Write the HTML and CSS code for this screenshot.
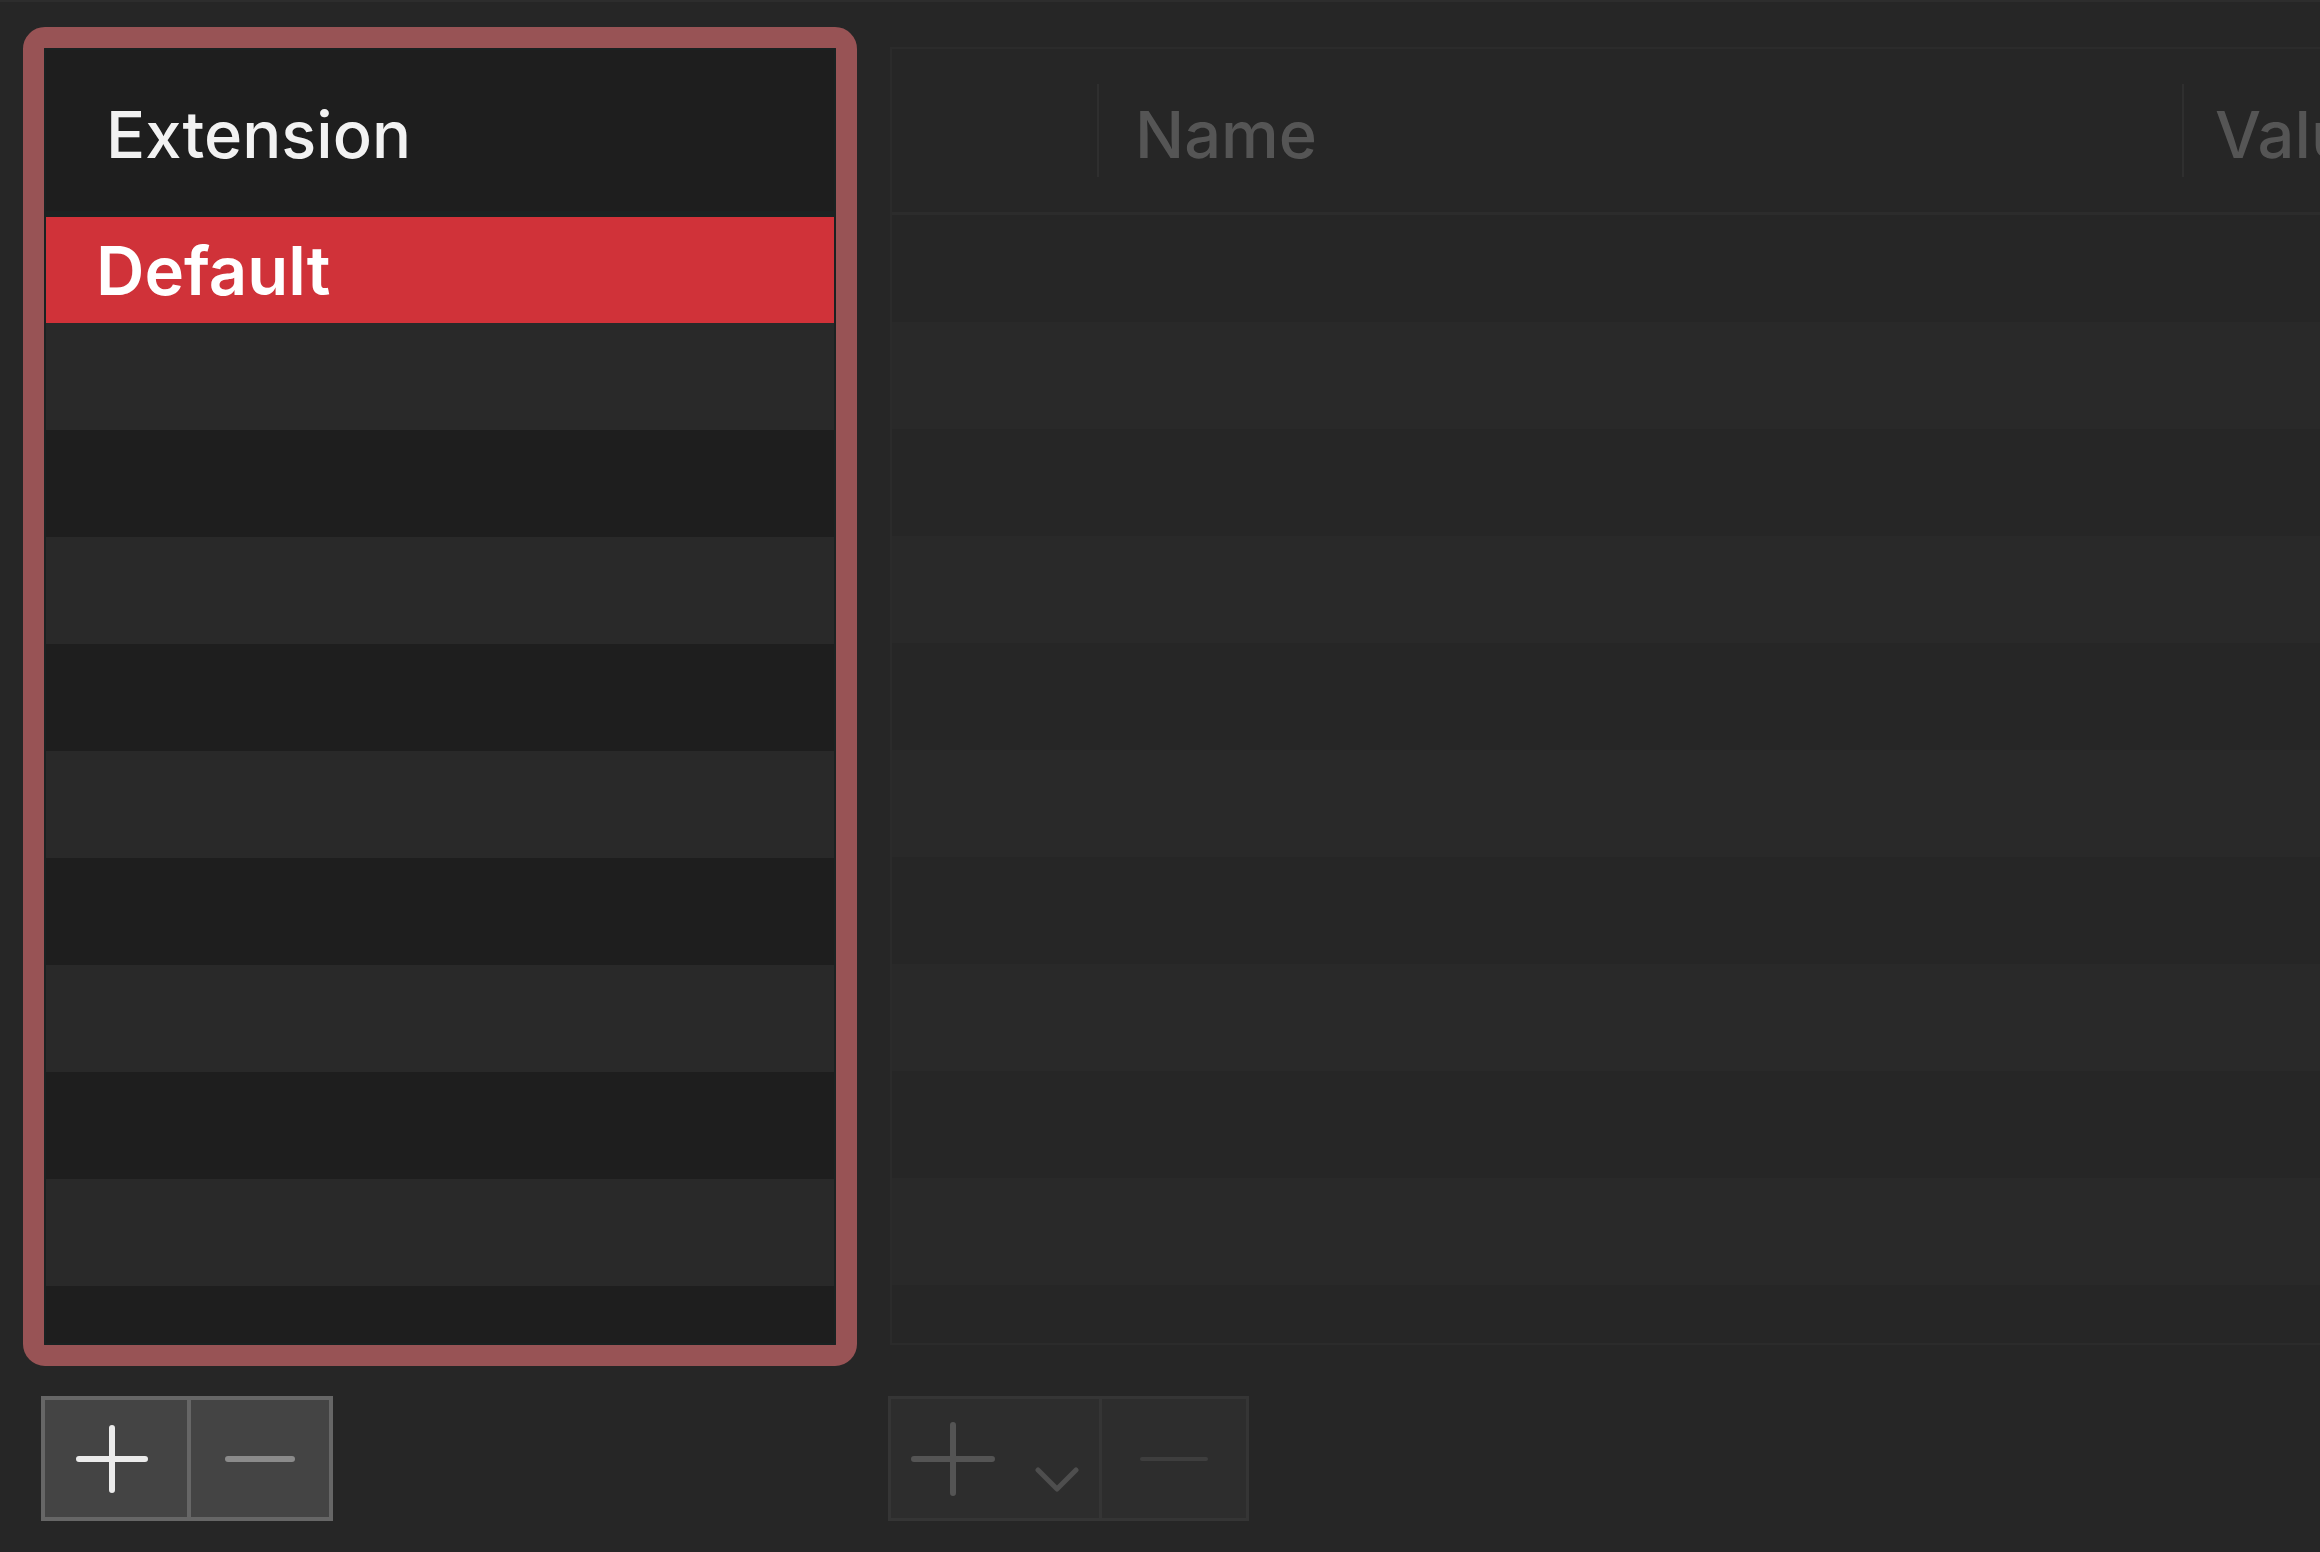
FILE: index.html
```html
<!DOCTYPE html>
<html lang="en">
<head>
    <meta charset="UTF-8">
    <meta name="viewport" content="width=device-width, initial-scale=1.0">
    <title>Extensions</title>
    <link rel="stylesheet" href="styles.css">
</head>
<body>
    <div class="side">
        <div class="frame">
            <div class="list">
                <div class="list-head">Extension</div>
                <div class="list-row selected">Default</div>
                <div class="list-row"></div>
                <div class="list-row"></div>
                <div class="list-row"></div>
                <div class="list-row"></div>
                <div class="list-row"></div>
                <div class="list-row"></div>
                <div class="list-row"></div>
                <div class="list-row"></div>
                <div class="list-row"></div>
                <div class="list-row"></div>
            </div>
        </div>
        <div class="btn-group active">
            <button class="seg seg-plus">
                <svg width="74" height="70" viewBox="0 0 74 70"><path d="M37 4 V66 M4 35 H70" /></svg>
            </button>
            <button class="seg">
                <svg width="72" height="10" viewBox="0 0 72 10"><path d="M4 5 H68" /></svg>
            </button>
        </div>
    </div>

    <div class="main">
        <div class="table">
            <div class="table-head">
                <div class="col col-first"></div>
                <div class="col col-name">Name</div>
                <div class="col col-value">Value</div>
            </div>
            <div class="table-body">
                <div class="table-row"></div>
                <div class="table-row"></div>
                <div class="table-row"></div>
                <div class="table-row"></div>
                <div class="table-row"></div>
                <div class="table-row"></div>
                <div class="table-row"></div>
                <div class="table-row"></div>
                <div class="table-row"></div>
                <div class="table-row"></div>
                <div class="table-row"></div>
            </div>
        </div>
        <div class="btn-group disabled">
            <button class="seg seg-add">
                <svg class="plus" width="84" height="74" viewBox="0 0 84 74"><path d="M42 3 V71 M3 37 H81" /></svg>
                <svg class="chevron" width="44" height="26" viewBox="0 0 44 26"><path d="M3 3 L22 22 L41 3" /></svg>
            </button>
            <button class="seg seg-remove">
                <svg width="70" height="10" viewBox="0 0 70 10"><path d="M3 5 H67" /></svg>
            </button>
        </div>
    </div>
</body>
</html>
```

FILE: styles.css
```css
html, body {
    height: 100%;
}

body {
    margin: 0;
    padding: 25px 0 0 23px;
    border-top: 2px solid #2d2d2d;
    box-sizing: border-box;
    background-color: #262626;
    font-family: Inter, "Noto Sans", sans-serif;
    display: flex;
    gap: 33px;
    overflow: hidden;
}

/* left: extension list */

.side {
    width: 834px;
    flex-shrink: 0;
}

.frame {
    height: 1339px;
    border: 21px solid #985355;
    border-radius: 22px;
    box-sizing: border-box;
    background-color: #1e1e1e;
    overflow: hidden;
}

.list {
    height: 100%;
    border: 2px solid #1b2222;
    box-sizing: border-box;
    overflow: hidden;
}

.list-head {
    height: 167px;
    border-bottom: 6px solid #1b2222;
    padding: 8px 0 0 60px;
    box-sizing: border-box;
    display: flex;
    align-items: center;
    font-size: 65px;
    font-weight: 500;
    color: #f2f2f2;
    background-color: #1e1e1e;
}

.list-row {
    height: 107px;
    background-color: #1e1e1e;
}

.list-row:nth-child(odd) {
    background-color: #292929;
}

.list-row.selected {
    height: 106px;
    padding-left: 50px;
    display: flex;
    align-items: center;
    font-size: 67px;
    font-weight: 600;
    color: #ffffff;
    background-color: #d03239;
}

/* segmented add / remove buttons */

.btn-group {
    display: flex;
    height: 125px;
    box-sizing: border-box;
}

.seg {
    margin: 0;
    padding: 0;
    display: flex;
    align-items: center;
    justify-content: center;
    background: none;
    border: none;
}

.seg svg path {
    fill: none;
    stroke-linecap: round;
    stroke-linejoin: round;
}

.btn-group.active {
    margin: 30px 0 0 18px;
    width: 292px;
    border: 4px solid #666666;
    background-color: #444444;
}

.btn-group.active .seg {
    width: 50%;
}

.btn-group.active .seg-plus {
    padding-right: 8px;
}

.btn-group.active .seg + .seg {
    border-left: 4px solid #666666;
}

.btn-group.active .seg:first-child path {
    stroke: #ebebeb;
    stroke-width: 6;
}

.btn-group.active .seg + .seg path {
    stroke: #8b8b8b;
    stroke-width: 6;
}

.btn-group.disabled {
    margin: 51px 0 0 -2px;
    width: 361px;
    border: 3px solid #353535;
    background-color: #2d2d2d;
}

.seg-add {
    width: 208px;
    justify-content: flex-start;
    padding-left: 20px;
    gap: 40px;
}

.seg-add .plus path {
    stroke: #545454;
    stroke-width: 6;
}

.seg-add .chevron {
    margin-top: 42px;
}

.seg-add .chevron path {
    stroke: #4e4e4e;
    stroke-width: 5;
}

.seg-remove {
    flex: 1;
    border-left: 3px solid #353535;
}

.seg-remove path {
    stroke: #3e3e3e;
    stroke-width: 4;
}

/* right: key / value table */

.main {
    flex: 1;
    min-width: 0;
    margin-top: 20px;
}

.table {
    width: 1600px;
    height: 1298px;
    border: 2px solid #2b2b2b;
    border-right: none;
    box-sizing: border-box;
    overflow: hidden;
}

.table-head {
    height: 166px;
    border-bottom: 3px solid #2c2c2c;
    box-sizing: border-box;
    display: flex;
    align-items: center;
    background-color: #262626;
}

.col {
    height: 93px;
    padding-top: 8px;
    display: flex;
    align-items: center;
    font-size: 65px;
    font-weight: 500;
    color: #555555;
    box-sizing: border-box;
}

.col-first {
    width: 205px;
}

.col-name {
    width: 1085px;
    padding-left: 36px;
    border-left: 2px solid #2f2f2f;
}

.col-value {
    flex: 1;
    padding-left: 31px;
    border-left: 2px solid #2f2f2f;
}

.table-row {
    height: 107px;
    background-color: #262626;
}

.table-row:nth-child(even) {
    background-color: #292929;
}
```
